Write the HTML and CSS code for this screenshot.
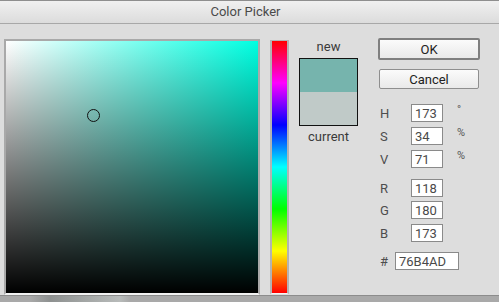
FILE: index.html
```html
<!DOCTYPE html>
<html lang="en">
<head>
    <meta charset="UTF-8">
    <meta name="viewport" content="width=device-width, initial-scale=1.0">
    <title>Color Picker</title>
    <link rel="stylesheet" href="styles.css">
</head>
<body>
    <div class="window">
        <div class="titlebar">Color Picker</div>

        <div class="dialog">
            <!-- saturation / value square -->
            <div class="sv-box">
                <div class="sv-area">
                    <span class="marker"></span>
                </div>
            </div>

            <div class="hue-bar"></div>

            <div class="preview">
                <div class="caption">new</div>
                <div class="swatch">
                    <div class="swatch-new"></div>
                    <div class="swatch-current"></div>
                </div>
                <div class="caption">current</div>
            </div>

            <div class="controls">
                <button class="btn btn-default">OK</button>
                <button class="btn btn-cancel">Cancel</button>

                <div class="fields">
                    <div class="row">
                        <label>H</label>
                        <input type="text" class="num" value="173" readonly>
                        <span class="unit">°</span>
                    </div>
                    <div class="row row-s">
                        <label>S</label>
                        <input type="text" class="num" value="34" readonly>
                        <span class="unit">%</span>
                    </div>
                    <div class="row row-v">
                        <label>V</label>
                        <input type="text" class="num" value="71" readonly>
                        <span class="unit">%</span>
                    </div>
                    <div class="row row-r">
                        <label>R</label>
                        <input type="text" class="num" value="118" readonly>
                    </div>
                    <div class="row row-g">
                        <label>G</label>
                        <input type="text" class="num" value="180" readonly>
                    </div>
                    <div class="row row-b">
                        <label>B</label>
                        <input type="text" class="num" value="173" readonly>
                    </div>
                    <div class="row row-hex">
                        <label class="hash">#</label>
                        <input type="text" class="hex" value="76B4AD" readonly>
                    </div>
                </div>
            </div>
        </div>

        <div class="desktop"></div>
    </div>
</body>
</html>
```

FILE: styles.css
```css
* {
    margin: 0;
    padding: 0;
    box-sizing: border-box;
    font-family: Roboto, "Liberation Sans", sans-serif;
}

body {
    width: 499px;
    height: 302px;
    overflow: hidden;
    background-color: #a9a9a9;
}

.window {
    width: 499px;
}

.titlebar {
    height: 24px;
    line-height: 22px;
    text-align: center;
    padding-right: 8px;
    font-size: 13px;
    color: #4a4a4a;
    background: linear-gradient(#f0f0f0, #dcdcdc);
    border-top: 1px solid #8e8e8e;
    border-bottom: 1px solid #a8a8a8;
}

.dialog {
    display: flex;
    align-items: flex-start;
    height: 271px;
    padding: 15px 0 0 4px;
    background-color: #dddddd;
}

.sv-box {
    border: 2px solid #a9a9a9;
    border-bottom-color: #f2f2f2;
}

.sv-area {
    position: relative;
    width: 252px;
    height: 252px;
    background:
        linear-gradient(to bottom, rgba(0,0,0,0), #000),
        linear-gradient(to right, #fff, #00ffe1);
}

.marker {
    position: absolute;
    left: 81px;
    top: 68px;
    width: 13px;
    height: 13px;
    border: 1.5px solid #111;
    border-radius: 50%;
}

.hue-bar {
    width: 19px;
    height: 254px;
    margin: 1px 0 0 10px;
    border: solid #b3b3b3;
    border-width: 1px 2px;
    border-bottom-color: #f4f4f4;
    background: linear-gradient(to bottom,
        #ff0000 0%, #ff00ff 16.67%, #0000ff 33.33%, #00ffff 50%,
        #00ff00 66.67%, #ffff00 83.33%, #ff0000 100%);
}

.preview {
    width: 59px;
    margin-left: 10px;
}

.caption {
    height: 16px;
    line-height: 16px;
    text-align: center;
    font-size: 13px;
    color: #3a3a3a;
}

.swatch {
    height: 68px;
    margin: 3px 0;
    border: 1px solid #111;
}

.swatch-new {
    height: 33px;
    background-color: #76b4ad;
}

.swatch-current {
    height: 33px;
    background-color: #c0cac8;
}

.controls {
    margin: -1px 0 0 20px;
}

.btn {
    display: block;
    font-size: 13px;
    color: #222;
    background: linear-gradient(#fbfbfb, #e9e9e9);
    border-radius: 2px;
    cursor: pointer;
}

.btn-default {
    width: 102px;
    height: 22px;
    border: 2px solid #7f7f7f;
}

.btn-cancel {
    width: 100px;
    height: 20px;
    margin: 9px 0 0 1px;
    border: 1px solid #8e8e8e;
}

.fields {
    margin-top: 15px;
}

.row {
    display: flex;
    align-items: flex-start;
    height: 18px;
}

.row-s, .row-v, .row-b {
    margin-top: 5px;
}

.row-g {
    margin-top: 4px;
}

.row-r {
    margin-top: 11px;
}

.row-hex {
    margin-top: 10px;
}

.row label {
    width: 33px;
    padding-left: 2px;
    line-height: 20px;
    font-size: 13px;
    color: #4d4d4d;
}

.row .hash {
    width: 17px;
}

.num, .hex {
    height: 18px;
    padding: 0 3px;
    font-size: 13px;
    color: #4a4a4a;
    background-color: #fff;
    border: 1px solid #8a8a8a;
    outline: none;
}

.num {
    width: 32px;
}

.hex {
    width: 64px;
}

.unit {
    margin-left: 14px;
    font-size: 11px;
    line-height: 12px;
    color: #555;
}

.desktop {
    height: 7px;
    border-top: 1px solid #8c8c8c;
    background: linear-gradient(to right, #a9a9a9 30px, #8e9190 50px, #b8bbba 120px, #a9a9a9 130px);
}
```
